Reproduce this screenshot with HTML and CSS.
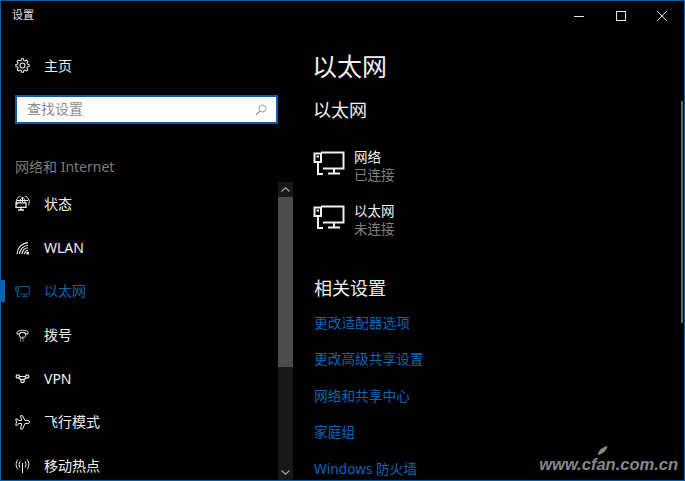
FILE: index.html
```html
<!DOCTYPE html>
<html lang="zh-CN">
<head>
<meta charset="utf-8">
<title>设置</title>
<link rel="stylesheet" href="styles.css">
</head>
<body>
<svg class="defs" width="0" height="0" aria-hidden="true">
  <symbol id="eth" viewBox="0 0 32 24">
    <path fill="none" stroke="currentColor" stroke-width="2" d="M8 1.5H30.5V17.5H10M21 17.5V22M15 22.5H27M1.500 2.500H8V11H1.500ZM5 11V23H10"/>
    <path fill="currentColor" d="M3.500 4.500h2.500v2h-2.500z"/>
  </symbol>
</svg>
<div class="window">
  <aside class="sidebar">
    <div class="app-title">设置</div>
    <div class="home row-item">
      <svg class="icon" viewBox="-8 -8 16 16"><path fill="none" stroke="currentColor" stroke-width="1.1" d="M7.13-1V1L5.16 1.58 4.77 2.54 5.75 4.33 4.33 5.75 2.54 4.77 1.58 5.16 1 7.13H-1L-1.58 5.16-2.54 4.77-4.33 5.75-5.75 4.33-4.77 2.54-5.16 1.58-7.13 1V-1L-5.16-1.58-4.77-2.54-5.75-4.33-4.33-5.75-2.54-4.77-1.58-5.16-1-7.13H1L1.58-5.16 2.54-4.77 4.33-5.75 5.75-4.33 4.77-2.54 5.16-1.58Z"/><circle r="2.600" fill="none" stroke="currentColor" stroke-width="1.100"/></svg>
      <span>主页</span>
    </div>
    <div class="search">
      <span class="placeholder">查找设置</span>
      <svg class="search-icon" viewBox="0 0 12 12"><circle cx="7.500" cy="4.500" r="3.500" fill="none" stroke="currentColor"/><path d="M5 7L1 11" stroke="currentColor" stroke-width="1.200"/></svg>
    </div>
    <div class="section-label">网络和 Internet</div>
    <div class="nav-area">
      <nav class="nav">
        <div class="row-item nav-row">
          <svg class="icon" viewBox="0 0 15 15"><g fill="none" stroke="currentColor"><path d="M2 9A6.500 6.500 0 1 1 13.500 9M7.500 1C5.500 3 5 4.500 5 7M7.500 1C9.500 3 10 4.500 10 7M7.500 1V6M2 4.500H13M1.500 7H3"/><path stroke-width="1.300" d="M1 6.800H11V11.400H1ZM6 11.400V13.600M3 14H9"/></g></svg>
          <span class="cjk">状态</span>
        </div>
        <div class="row-item nav-row">
          <svg class="icon" viewBox="0 0 15 15"><g fill="none" stroke="currentColor" stroke-width="1.100"><path d="M2 14A12 12 0 0 1 13 2.600M4.500 14A9.500 9.500 0 0 1 13 5.200M7 14A7 7 0 0 1 13 7.800M9.500 14A4.500 4.500 0 0 1 13 10.300"/></g><rect x="11.500" y="12" width="2.500" height="2.500" fill="currentColor"/></svg>
          <span>WLAN</span>
        </div>
        <div class="row-item nav-row active">
          <svg class="icon"><use href="#eth"/></svg>
          <span class="cjk">以太网</span>
          <i class="indicator"></i>
        </div>
        <div class="row-item nav-row">
          <svg class="icon" viewBox="0 0 15 15"><g fill="none" stroke="currentColor"><path d="M2 7V5.500C2 2.500 13 2.500 13 5.500V7H10V5.500H5V7Z"/><path d="M5 6.500C3.500 9 5 11 7.500 11S11.500 9 10 6.500"/></g><path stroke="currentColor" stroke-dasharray="1 1.500" d="M5 10H10M5 12H10M5 14H10"/></svg>
          <span class="cjk">拨号</span>
        </div>
        <div class="row-item nav-row">
          <svg class="icon" viewBox="0 0 15 15"><g fill="none" stroke="currentColor" stroke-width="1.200"><circle cx="2.800" cy="5.500" r="1.700"/><circle cx="12.200" cy="5.500" r="1.700"/><circle cx="7.500" cy="10" r="1.700"/><path d="M4.500 5.500H10.500M4 7L6.300 8.800M11 7L8.700 8.800"/></g></svg>
          <span>VPN</span>
        </div>
        <div class="row-item nav-row">
          <svg class="icon" viewBox="0 0 15 15"><path fill="none" stroke="currentColor" d="M5.500.7H7.500L10 5.500H13C15 5.500 15 8.500 13 8.500H10L7.500 14H5.500L6.700 8.500H3.500L2.500 10.200H.7L1.500 7 .7 4H2.500L3.500 5.500H6.700Z"/></svg>
          <span class="cjk">飞行模式</span>
        </div>
        <div class="row-item nav-row">
          <svg class="icon" viewBox="0 0 15 15"><g fill="none" stroke="currentColor"><path d="M7.500 5V15M3 1.500C.5 4.500.5 8.500 3 11.500M12 1.500C14.500 4.500 14.500 8.500 12 11.500M5 3.500C3.700 5.500 3.700 7.500 5 9.500M10 3.500C11.300 5.500 11.300 7.500 10 9.500"/></g></svg>
          <span class="cjk">移动热点</span>
        </div>
      </nav>
      <div class="sb">
        <div class="sb-btn"><svg viewBox="0 0 9 5" class="chev"><path d="M.5 4.500L4.500 .8 8.500 4.500" fill="none" stroke="currentColor" stroke-width="1.100"/></svg></div>
        <div class="sb-thumb"></div>
        <div class="sb-track"></div>
        <div class="sb-btn"><svg viewBox="0 0 9 5" class="chev"><path d="M.5 .5L4.500 4.200 8.500 .5" fill="none" stroke="currentColor" stroke-width="1.100"/></svg></div>
      </div>
    </div>
  </aside>
  <main class="main">
    <div class="controls">
      <div class="ctl"><svg viewBox="0 0 10 10"><path d="M0 5.500H10" stroke="currentColor" stroke-width="1"/></svg></div>
      <div class="ctl"><svg viewBox="0 0 10 10"><rect x=".5" y=".5" width="9" height="9" fill="none" stroke="currentColor"/></svg></div>
      <div class="ctl"><svg viewBox="0 0 10 10"><path d="M.3 .3L9.700 9.700M9.700 .3L.3 9.700" stroke="currentColor" stroke-width="1"/></svg></div>
    </div>
    <div class="body">
      <div class="content">
        <h1>以太网</h1>
        <h2 class="sub-head">以太网</h2>
        <div class="net-list">
          <div class="net">
            <svg class="net-icon"><use href="#eth"/></svg>
            <div class="net-text"><div>网络</div><div class="net-sub">已连接</div></div>
          </div>
          <div class="net">
            <svg class="net-icon"><use href="#eth"/></svg>
            <div class="net-text"><div>以太网</div><div class="net-sub">未连接</div></div>
          </div>
        </div>
        <h2 class="related">相关设置</h2>
        <div class="links">
          <a>更改适配器选项</a>
          <a>更改高级共享设置</a>
          <a>网络和共享中心</a>
          <a>家庭组</a>
          <a>Windows 防火墙</a>
        </div>
      </div>
      <div class="main-sb"><div class="main-thumb"></div></div>
    </div>
  </main>
  <div class="watermark">
    <svg class="leaf" viewBox="0 0 10 10"><path d="M0 9C1 4 5 1 10 0 9 5 5 8 0 9Z" fill="currentColor"/></svg>
    www.cfan.com.cn
  </div>
</div>
</body>
</html>
```

FILE: styles.css
```css
html, body {
  margin: 0;
  padding: 0;
  background: #000;
}
body {
  font-family: "Noto Sans", "Noto Sans CJK SC", sans-serif;
  font-size: 14px;
  color: #f0f0f0;
}
.defs { position: absolute; }
.window {
  position: relative;
  box-sizing: border-box;
  width: 685px;
  height: 481px;
  border: 1px solid #0a5ea8;
  background: #000;
  display: flex;
  overflow: hidden;
}
.sidebar {
  width: 292px;
  flex: none;
  display: flex;
  flex-direction: column;
}
.app-title {
  height: 29px;
  line-height: 27px;
  padding-left: 11px;
  font-size: 11px;
  color: #e4e4e4;
}
.row-item {
  display: flex;
  align-items: center;
  gap: 14px;
  padding-left: 14px;
}
.icon {
  width: 15px;
  height: 15px;
  flex: none;
}
.home {
  height: 34px;
  margin-top: 18px;
}
.search {
  box-sizing: border-box;
  width: 263px;
  height: 29px;
  margin: 13px 0 0 14px;
  border: 2px solid #0a5ea8;
  background: #fff;
  display: flex;
  align-items: center;
  justify-content: space-between;
  padding: 0 9px 0 10px;
}
.placeholder {
  color: #8c8c8c;
  margin-bottom: 4px;
}
.search-icon {
  width: 12px;
  height: 12px;
  color: #9a9a9a;
}
.section-label {
  height: 20px;
  line-height: 20px;
  margin: 33px 0 0 14px;
  color: #7c7c7c;
}
.nav-area {
  display: flex;
  flex: 1;
  margin-top: 5px;
  min-height: 0;
}
.nav {
  width: 277px;
  flex: none;
}
.nav-row {
  position: relative;
  height: 43.67px;
}
.cjk { margin-bottom: 2px; }
.active { color: #0a63b0; }
.indicator {
  position: absolute;
  left: 0;
  top: 11px;
  width: 4px;
  height: 22px;
  background: #0a63b0;
}
.sb {
  width: 15px;
  flex: none;
  display: flex;
  flex-direction: column;
  background: #181818;
}
.sb-btn {
  height: 15px;
  flex: none;
  display: flex;
  align-items: center;
  justify-content: center;
  color: #a8a8a8;
}
.chev {
  width: 9px;
  height: 5px;
}
.sb-thumb {
  height: 170px;
  flex: none;
  background: #4c4c4c;
}
.sb-track { flex: 1; }
.main {
  flex: 1;
  min-width: 0;
  display: flex;
  flex-direction: column;
}
.controls {
  height: 29px;
  flex: none;
  display: flex;
  justify-content: flex-end;
  padding-right: 1px;
}
.ctl {
  width: 41.5px;
  display: flex;
  align-items: center;
  justify-content: center;
  color: #e8e8e8;
}
.ctl svg {
  width: 10px;
  height: 10px;
}
.body {
  flex: 1;
  min-height: 0;
  display: flex;
}
.content {
  flex: 1;
  padding-left: 21px;
}
h1, h2 {
  margin: 0;
  font-weight: 400;
}
h1 {
  height: 36px;
  line-height: 36px;
  margin: 18px 0 0 -2px;
  font-size: 25px;
}
h2 {
  height: 26px;
  line-height: 26px;
  margin-top: 13px;
  font-size: 18px;
}
.sub-head { margin-left: -1px; }
.net-list {
  margin-top: 25px;
  display: flex;
  flex-direction: column;
  gap: 18px;
}
.net {
  display: flex;
  gap: 8px;
}
.net-icon {
  width: 32px;
  height: 24px;
  margin: 3px 0 0 -1px;
  flex: none;
}
.net-text {
  line-height: 18px;
  font-size: 13.5px;
  margin-left: 1px;
}
.net-sub { color: #808080; }
.related { margin-top: 37px; }
.links {
  margin-top: 12px;
  display: flex;
  flex-direction: column;
  gap: 16.4px;
}
.links a {
  height: 20px;
  line-height: 20px;
  font-size: 13.7px;
  color: #0a66b8;
}
.main-sb {
  width: 2px;
  flex: none;
  margin-right: 1px;
  padding-top: 71px;
}
.main-thumb {
  height: 222px;
  background: #666;
}
.watermark {
  position: absolute;
  right: 6px;
  bottom: 7px;
  font: italic 700 16.5px/18px "Liberation Sans", sans-serif;
  color: #85898c;
}
.leaf {
  position: absolute;
  left: 58px;
  top: -9px;
  width: 11px;
  height: 10px;
}
```
